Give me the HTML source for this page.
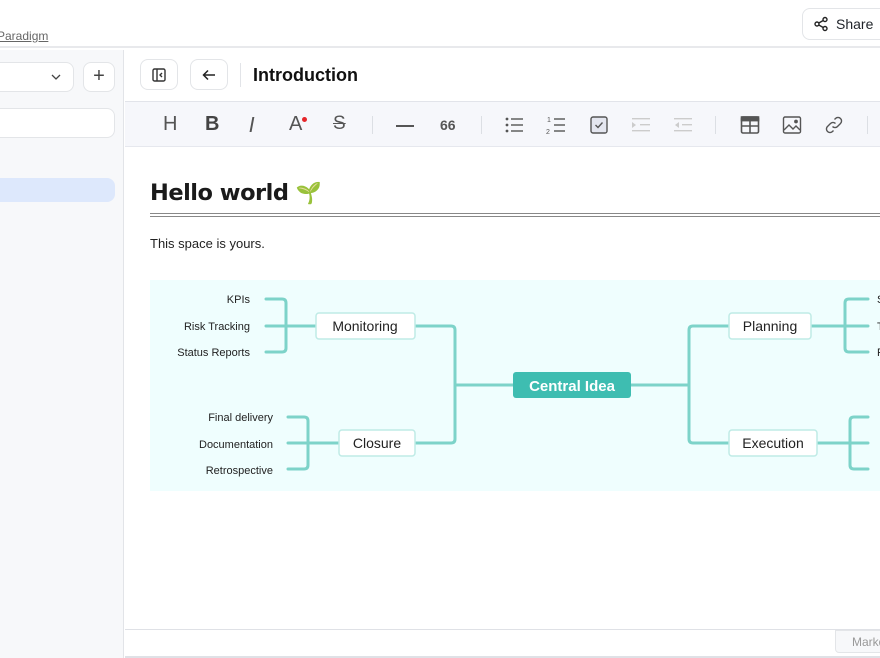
<!DOCTYPE html>
<html><head><meta charset="utf-8"><style>
*{box-sizing:border-box;margin:0;padding:0}
body{width:880px;height:658px;overflow:hidden;background:#fff;font-family:"Liberation Sans","DejaVu Sans",sans-serif;position:relative;color:#1f2329}
.abs{position:absolute}
.btn{position:absolute;border:1px solid #e3e5e8;border-radius:8px;background:#fff}
.tb{position:absolute;top:101px;left:125px;width:755px;height:46px;background:#f6f7fb;border-top:1px solid #e2e4ea;border-bottom:1px solid #e6e8ee}
.ic{position:absolute;top:12px;width:22px;height:22px;color:#555}
.sep{position:absolute;top:14px;width:1px;height:18px;background:#dcdfe4}
</style></head><body>
<div class="abs" style="left:0;top:0;width:880px;height:48px;background:#fff;border-bottom:2px solid #e8e9ec"></div>
<div class="abs" style="left:-3px;top:29px;font-size:12px;color:#666;text-decoration:underline">Paradigm</div>
<div class="btn" style="left:802px;top:8px;width:90px;height:32px;">
<svg class="abs" style="left:10px;top:7px" width="16" height="16" viewBox="0 0 16 16" fill="none" stroke="#222" stroke-width="1.4"><circle cx="4" cy="8" r="2"/><circle cx="12" cy="3.5" r="2"/><circle cx="12" cy="12.5" r="2"/><path d="M5.8 7 10.2 4.5M5.8 9 10.2 11.5"/></svg>
<div class="abs" style="left:33px;top:7px;font-size:14px;color:#1f2329">Share</div></div>
<!-- sidebar -->
<div class="abs" style="left:0;top:50px;width:124px;height:608px;background:#f7f8fa;border-right:1px solid #e2e4e8"></div>
<div class="btn" style="left:-10px;top:62px;width:84px;height:30px"><svg class="abs" style="left:60px;top:10px" width="10" height="8" viewBox="0 0 10 8" fill="none" stroke="#444" stroke-width="1.3"><path d="M1 2l4 4 4-4"/></svg></div>
<div class="btn" style="left:83px;top:62px;width:32px;height:30px;font-size:20px;text-align:center;line-height:27px;color:#444">+</div>
<div class="btn" style="left:-10px;top:108px;width:125px;height:30px"></div>
<div class="abs" style="left:-10px;top:178px;width:125px;height:24px;background:#dde8fc;border-radius:8px"></div>
<!-- header -->
<div class="btn" style="left:140px;top:59px;width:38px;height:31px"><svg class="abs" style="left:11px;top:8px" width="14" height="14" viewBox="0 0 14 14" fill="none" stroke="#333" stroke-width="1.4"><rect x="1" y="1" width="12" height="12" rx="1.5"/><path d="M5 1v12M10 5l-2 2 2 2"/></svg></div>
<div class="btn" style="left:190px;top:59px;width:38px;height:31px"><svg class="abs" style="left:11px;top:8px" width="14" height="14" viewBox="0 0 14 14" fill="none" stroke="#222" stroke-width="1.5"><path d="M13 7H2M6 2.5 1.5 7 6 11.5"/></svg></div>
<div class="abs" style="left:240px;top:63px;width:1px;height:24px;background:#e2e4e8"></div>
<div class="abs" style="left:253px;top:65px;font-size:18px;font-weight:bold;color:#111">Introduction</div>
<!-- toolbar -->
<div class="tb">
<div class="abs" style="left:38px;top:11px;font-size:20px;color:#555">H</div>
<div class="abs" style="left:80px;top:11px;font-size:20px;font-weight:bold;color:#444">B</div>
<div class="abs" style="left:124px;top:11px;font-size:20px;font-style:italic;color:#555;font-family:'DejaVu Sans',sans-serif;font-weight:normal">I</div>
<div class="abs" style="left:164px;top:11px;font-size:20px;color:#555">A</div><div class="abs" style="left:177px;top:15px;width:5px;height:5px;border-radius:50%;background:#e5262a"></div>
<div class="abs" style="left:208px;top:11px;font-size:19px;color:#555;text-decoration:line-through">S</div>
<div class="sep" style="left:247px"></div>
<div class="abs" style="left:271px;top:23px;width:18px;height:2px;background:#555"></div>
<div class="abs" style="left:315px;top:15px;font-size:14px;font-weight:bold;color:#555">66</div>
<div class="sep" style="left:356px"></div>
<svg class="ic" style="left:379px" viewBox="0 0 22 22" fill="#555"><circle cx="3" cy="5" r="1.4"/><circle cx="3" cy="11" r="1.4"/><circle cx="3" cy="17" r="1.4"/><rect x="7" y="4.3" width="12" height="1.4"/><rect x="7" y="10.3" width="12" height="1.4"/><rect x="7" y="16.3" width="12" height="1.4"/></svg>
<svg class="ic" style="left:421px" viewBox="0 0 22 22" fill="#555"><text x="1" y="8" font-size="7" font-family="Liberation Sans">1</text><text x="0" y="20" font-size="7" font-family="Liberation Sans">2</text><rect x="8" y="4.3" width="11" height="1.4"/><rect x="8" y="10.3" width="11" height="1.4"/><rect x="8" y="16.3" width="11" height="1.4"/></svg>
<svg class="ic" style="left:463px" viewBox="0 0 22 22" fill="none" stroke="#555" stroke-width="1.4"><rect x="3" y="3" width="16" height="16" rx="2" fill="#e4e6ef"/><path d="M7.5 11l2.5 2.5 4.5-5"/></svg>
<svg class="ic" style="left:505px" viewBox="0 0 22 22" fill="#ccc"><rect x="2" y="4" width="18" height="1.4"/><rect x="10" y="10" width="10" height="1.4"/><rect x="2" y="16" width="18" height="1.4"/><path d="M2 8l4 3-4 3z"/></svg>
<svg class="ic" style="left:547px" viewBox="0 0 22 22" fill="#ccc"><rect x="2" y="4" width="18" height="1.4"/><rect x="10" y="10" width="10" height="1.4"/><rect x="2" y="16" width="18" height="1.4"/><path d="M7 8l-4 3 4 3z"/></svg>
<div class="sep" style="left:590px"></div>
<svg class="ic" style="left:614px" viewBox="0 0 22 22" fill="none" stroke="#555" stroke-width="1.6"><rect x="2.5" y="3" width="17" height="16" rx="1.5"/><path d="M2.5 6.5h17M2.5 12h17M11 6v13" /><rect x="2.5" y="3" width="17" height="3.5" fill="#555"/></svg>
<svg class="ic" style="left:656px" viewBox="0 0 22 22" fill="none" stroke="#555" stroke-width="1.4"><rect x="2.5" y="3" width="17" height="16" rx="1.5"/><path d="M3 16l5-5 4 4 3-3 4 4"/><circle cx="15" cy="7.5" r="1.2" fill="#555"/></svg>
<svg class="ic" style="left:698px" viewBox="0 0 22 22" fill="none" stroke="#555" stroke-width="1.4"><path d="M9.5 12.5a3.5 3.5 0 0 0 5 0l3-3a3.5 3.5 0 0 0-5-5l-1 1M12.5 9.5a3.5 3.5 0 0 0-5 0l-3 3a3.5 3.5 0 0 0 5 5l1-1"/></svg>
<div class="sep" style="left:742px"></div>
</div>
<!-- content -->
<div class="abs" style="left:150px;top:180px;font-size:22.5px;font-weight:bold;color:#1a1a1a;font-family:'DejaVu Sans',sans-serif;letter-spacing:-0.5px">Hello world <span style="font-size:21px">🌱</span></div>
<div class="abs" style="left:150px;top:213px;width:730px;height:4px;border-top:1px solid #888;border-bottom:1px solid #888"></div>
<div class="abs" style="left:150px;top:236px;font-size:13px;color:#222">This space is yours.</div>
<svg class="abs" style="left:0;top:0" width="880" height="658" font-family="Liberation Sans, sans-serif">
<rect x="150" y="280" width="730" height="211" fill="#effefe"/>
<g fill="none" stroke="#7dd3c9" stroke-width="3" stroke-linecap="round" stroke-linejoin="round">
<path d="M513 385H455M415 326h36q4 0 4 4v109q0 4-4 4h-36"/>
<path d="M631 385H689M729 326h-36q-4 0-4 4v109q0 4 4 4h36"/>
<path d="M316 326H266M266 299h16q4 0 4 4v45q0 4-4 4h-16"/>
<path d="M339 443H288M288 417h16q4 0 4 4v44q0 4-4 4h-16"/>
<path d="M811 326H868M868 299h-19q-4 0-4 4v45q0 4 4 4h19"/>
<path d="M817 443H868M868 417h-14q-4 0-4 4v44q0 4 4 4h14"/>
</g>
<rect x="513" y="372" width="118" height="26" rx="3" fill="#3ebdb1"/>
<text x="572" y="391" fill="#fff" font-size="15" font-weight="bold" text-anchor="middle">Central Idea</text>
<g fill="#fff" stroke="#bfebe6" stroke-width="1.5">
<rect x="316" y="313" width="99" height="26" rx="3"/><rect x="339" y="430" width="76" height="26" rx="3"/>
<rect x="729" y="313" width="82" height="26" rx="3"/><rect x="729" y="430" width="88" height="26" rx="3"/>
</g>
<g font-size="14" fill="#222" text-anchor="middle">
<text x="365" y="331">Monitoring</text><text x="377" y="448">Closure</text>
<text x="770" y="331">Planning</text><text x="773" y="448">Execution</text></g>
<g font-size="11" fill="#222" text-anchor="end">
<text x="250" y="303">KPIs</text><text x="250" y="330">Risk Tracking</text><text x="250" y="356">Status Reports</text>
<text x="273" y="421">Final delivery</text><text x="273" y="448">Documentation</text><text x="273" y="474">Retrospective</text></g>
<g font-size="11" fill="#222"><text x="877" y="303">S</text><text x="877" y="330">T</text><text x="877" y="356">R</text></g>
</svg>
<div class="abs" style="left:125px;top:629px;width:755px;height:1px;background:#dfe1e6"></div>
<div class="abs" style="left:125px;top:656px;width:755px;height:2px;background:#dfe1e6"></div>
<div class="abs" style="left:835px;top:630px;width:60px;height:23px;background:#f7f8fa;border:1px solid #e3e5e8;border-radius:0 0 0 4px;font-size:12px;color:#999;padding:4px 0 0 16px">Markdown</div>
</body></html>
